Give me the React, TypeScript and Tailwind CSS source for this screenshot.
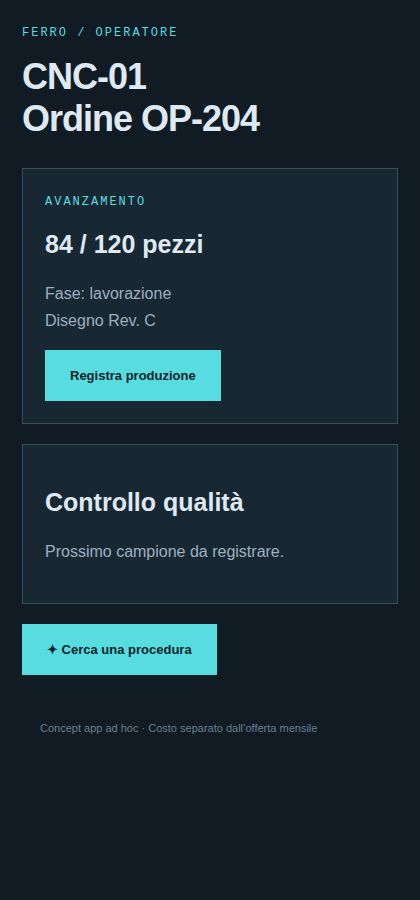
import type { ReactNode } from 'react'

function Eyebrow({ children }: { children: ReactNode }) {
  return (
    <p className="font-['Courier_New','Liberation_Mono',monospace] text-xs leading-5 tracking-[2px] uppercase text-[#57dce0]">
      {children}
    </p>
  )
}

function Card({ children }: { children: ReactNode }) {
  return <section className="border border-[#34505e] bg-[#182833] px-[22px]">{children}</section>
}

function ActionButton({ children }: { children: ReactNode }) {
  return (
    <button type="button" className="bg-[#57dce0] px-[25px] py-4 text-[13px] leading-[19px] font-bold text-[#0d2329]">
      {children}
    </button>
  )
}

export default function App() {
  return (
    <div className="min-h-screen bg-[#101b24] px-[22px] pt-[23px] font-['Liberation_Sans',Arial,sans-serif] text-[#dfe9f3]">
      <main>
        <header className="pb-7">
          <Eyebrow>Ferro / Operatore</Eyebrow>
          <h1 className="pt-[13px] text-4xl leading-[42px] font-bold tracking-[-1px]">
            CNC-01
            <br />
            Ordine OP-204
          </h1>
        </header>

        <div className="flex flex-col items-start gap-5">
          <div className="flex w-full flex-col gap-5">
            <Card>
              <div className="pt-[23px] pb-[22px]">
                <Eyebrow>Avanzamento</Eyebrow>
                <h2 className="pt-[18px] text-[25px] leading-7 font-bold">84 / 120 pezzi</h2>
                <p className="pt-[22px] pb-4 text-base leading-[27px] text-[#9db0c0]">
                  Fase: lavorazione
                  <br />
                  Disegno Rev. C
                </p>
                <ActionButton>Registra produzione</ActionButton>
              </div>
            </Card>

            <Card>
              <div className="pt-[43px] pb-[38px]">
                <h2 className="text-[25px] leading-7 font-bold">Controllo qualità</h2>
                <p className="pt-[22px] text-base leading-[27px] text-[#9db0c0]">Prossimo campione da registrare.</p>
              </div>
            </Card>
          </div>

          <ActionButton>✦ Cerca una procedura</ActionButton>
        </div>
      </main>

      <footer className="px-[18px] pt-11 text-[11px] leading-[19px] text-[#688090]">
        Concept app ad hoc · Costo separato dall’offerta mensile
      </footer>
    </div>
  )
}
